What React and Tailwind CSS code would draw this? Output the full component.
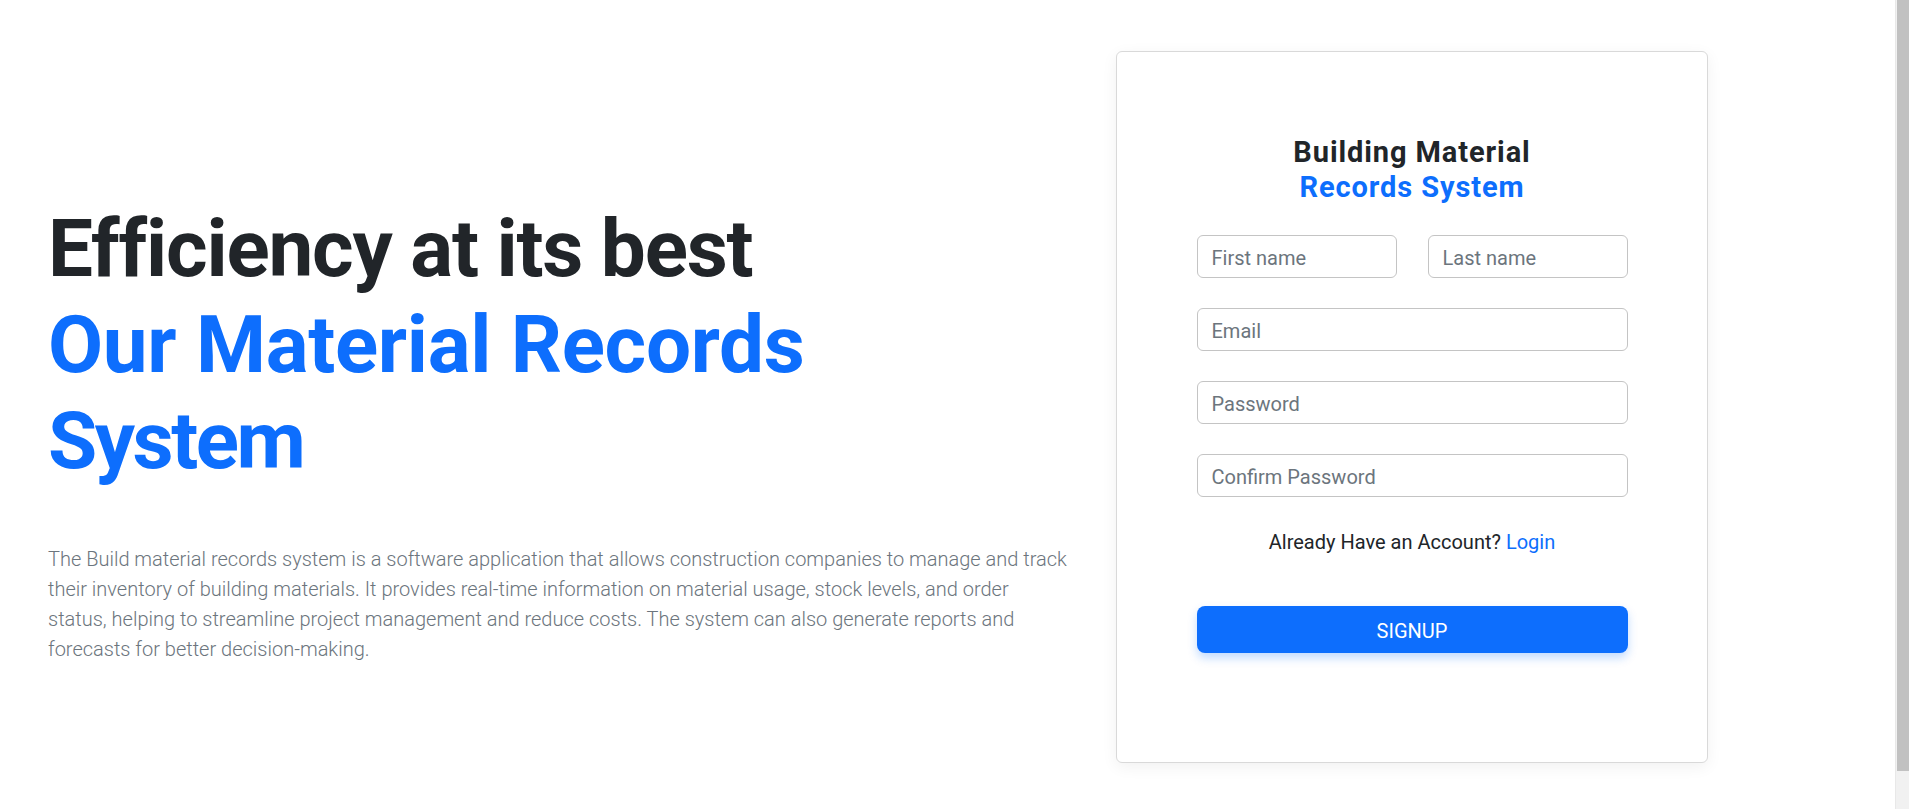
export default function App() {
  return (
    <div className="flex min-h-screen bg-white font-['Roboto',sans-serif]">
      <main className="flex flex-1 items-start pt-[51px]">
        {/* Left intro */}
        <section className="w-[1116px] shrink-0 pl-12 pt-[150px]">
          <h1 className="text-[80px] font-bold leading-[96px] text-[#212529]">
            <span className="block tracking-[-1.2px]">Efficiency at its best</span>
            <span className="block text-[#0d6efd] tracking-[-0.3px]">Our Material Records</span>
            <span className="block text-[#0d6efd] tracking-[-2.5px]">System</span>
          </h1>
          <p className="mt-[55px] whitespace-nowrap text-[20px] font-light leading-[30px] text-[#6c757d]">
            The Build material records system is a software application that allows construction companies to manage and track
            <br />
            their inventory of building materials. It provides real-time information on material usage, stock levels, and order
            <br />
            status, helping to streamline project management and reduce costs. The system can also generate reports and
            <br />
            forecasts for better decision-making.
          </p>
        </section>

        {/* Signup card */}
        <div className="flex h-[712px] w-[592px] shrink-0 flex-col items-center rounded-md border border-[#d9d9d9] bg-white pt-[83px] shadow-[0_4px_16px_rgba(0,0,0,0.06)]">
          <h3 className="text-center text-[29px] font-bold leading-[35px] tracking-[0.9px] text-[#212529]">
            <span className="block">Building Material</span>
            <span className="block text-[#0d6efd]">Records System</span>
          </h3>

          <form className="mt-[30px] flex w-[431px] flex-col gap-[30px]" onSubmit={(e) => e.preventDefault()}>
            <div className="flex gap-[31px]">
              <input
                type="text"
                placeholder="First name"
                className="h-[43px] w-[200px] rounded-md border border-[#c4c4c4] px-[14px] pt-[3px] text-[20px] text-[#212529] outline-none placeholder:text-[#6c757d]"
              />
              <input
                type="text"
                placeholder="Last name"
                className="h-[43px] w-[200px] rounded-md border border-[#c4c4c4] px-[14px] pt-[3px] text-[20px] text-[#212529] outline-none placeholder:text-[#6c757d]"
              />
            </div>
            <input
              type="email"
              placeholder="Email"
              className="h-[43px] w-full rounded-md border border-[#c4c4c4] px-[14px] pt-[3px] text-[20px] text-[#212529] outline-none placeholder:text-[#6c757d]"
            />
            <input
              type="password"
              placeholder="Password"
              className="h-[43px] w-full rounded-md border border-[#c4c4c4] px-[14px] pt-[3px] text-[20px] text-[#212529] outline-none placeholder:text-[#6c757d]"
            />
            <input
              type="password"
              placeholder="Confirm Password"
              className="h-[43px] w-full rounded-md border border-[#c4c4c4] px-[14px] pt-[3px] text-[20px] text-[#212529] outline-none placeholder:text-[#6c757d]"
            />

            <p className="text-center text-[20px] leading-[30px] text-[#212529]">
              Already Have an Account? <a href="#" className="text-[#0d6efd]">Login</a>
            </p>

            <button
              type="submit"
              className="mt-[19px] flex h-[47px] w-full items-center justify-center rounded-lg bg-[#0d6efd] pt-[3px] text-[20px] text-white shadow-[0_5px_10px_rgba(13,110,253,0.25)]"
            >
              SIGNUP
            </button>
          </form>
        </div>
      </main>

      {/* Scrollbar */}
      <div className="h-screen w-[14px] shrink-0 border-l border-[#e8e8e8] bg-[#f1f1f1]">
        <div className="ml-[1px] h-[771px] bg-[#c1c1c1]" />
      </div>
    </div>
  );
}
